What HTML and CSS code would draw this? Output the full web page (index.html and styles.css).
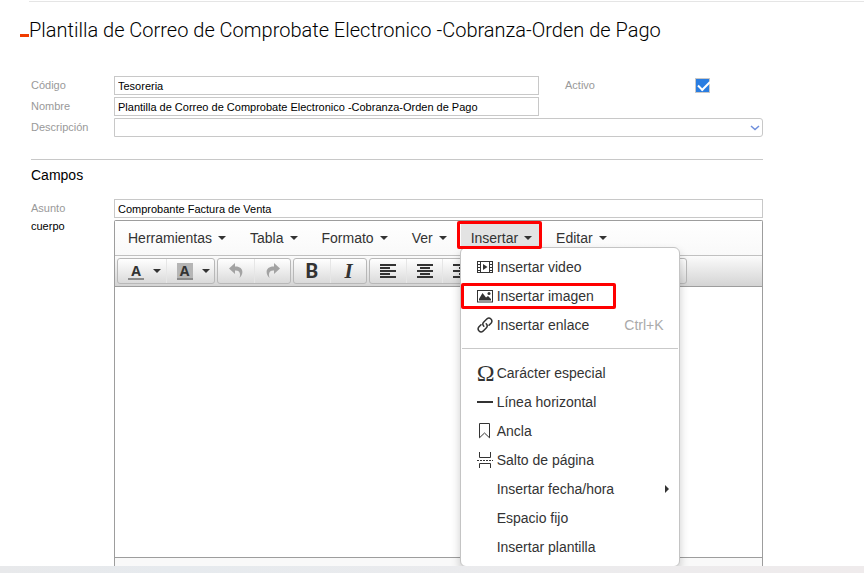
FILE: index.html
```html
<!DOCTYPE html>
<html lang="es">
<head>
    <meta charset="UTF-8">
    <meta name="viewport" content="width=device-width, initial-scale=1.0">
    <title>Plantilla de Correo</title>
    <link rel="stylesheet" href="styles.css">
</head>
<body>
    <main class="page">
        <h1 class="page-title"><span class="dash"></span>Plantilla de Correo de Comprobate Electronico -Cobranza-Orden de Pago</h1>

        <form class="form">
            <div class="row">
                <label for="codigo">Código</label>
                <input type="text" id="codigo" value="Tesoreria">
                <div class="side">
                    <label for="activo">Activo</label>
                    <input type="checkbox" id="activo" class="check" checked>
                </div>
            </div>
            <div class="row">
                <label for="nombre">Nombre</label>
                <input type="text" id="nombre" value="Plantilla de Correo de Comprobate Electronico -Cobranza-Orden de Pago">
            </div>
            <div class="row wide">
                <label for="descripcion">Descripción</label>
                <div class="select-wrap">
                    <select id="descripcion"><option></option></select>
                    <svg class="chevron" width="10" height="6" viewBox="0 0 10 6"><path d="M1 1l4 3.600L9 1" fill="none" stroke="#6f8fdc" stroke-width="1.500"/></svg>
                </div>
            </div>

            <h2 class="section-title">Campos</h2>

            <div class="row wide">
                <label for="asunto">Asunto</label>
                <input type="text" id="asunto" value="Comprobante Factura de Venta">
            </div>
            <div class="row wide body-row">
                <span class="body-label">cuerpo</span>
                <div class="editor">
                    <div class="menubar">
                        <button type="button" class="menu-btn">Herramientas<i class="caret"></i></button>
                        <button type="button" class="menu-btn">Tabla<i class="caret"></i></button>
                        <button type="button" class="menu-btn">Formato<i class="caret"></i></button>
                        <button type="button" class="menu-btn">Ver<i class="caret"></i></button>
                        <div class="menu-holder">
                            <button type="button" class="menu-btn active">Insertar<i class="caret"></i></button>
                            <span class="mark mark-menu"></span>
                            <ul class="dropdown">
                                <li><button type="button" class="item">
                                    <svg class="icon" viewBox="0 0 16 16"><path fill="#333" fill-rule="evenodd" d="M0 2h16v12H0zM1 3v2h2V3zM1 6v2h2V6zM1 9v2h2V9zM1 12v1h2v-1zM13 3v2h2V3zM13 6v2h2V6zM13 9v2h2V9zM13 12v1h2v-1zM4 3v10h8V3z"/><path fill="#333" d="M6 5l4.500 3L6 11z"/></svg>
                                    <span>Insertar video</span></button></li>
                                <li><button type="button" class="item">
                                    <svg class="icon" viewBox="0 0 16 16"><path fill="#333" fill-rule="evenodd" d="M0 2h16v12.500H0zM1 3v10.500h14V3z"/><path fill="#333" d="M2 12.500V11l3.500-6 3.500 4.500 2-1.500L14 11v1.500z"/><circle cx="12" cy="5.500" r="1.500" fill="#333"/></svg>
                                    <span>Insertar imagen</span></button><span class="mark mark-item"></span></li>
                                <li><button type="button" class="item">
                                    <svg class="icon" viewBox="0 0 16 16"><g fill="none" stroke="#333" stroke-width="1.500" stroke-linecap="round"><path d="M6.800 9.200a3 3 0 0 1 0-4.200L10 1.800a3 3 0 0 1 4.200 4.200L12 8.200"/><path d="M9.200 6.800a3 3 0 0 1 0 4.200L6 14.200A3 3 0 0 1 1.800 10L4 7.800"/></g></svg>
                                    <span>Insertar enlace</span><span class="shortcut">Ctrl+K</span></button></li>
                                <li class="divider"></li>
                                <li><button type="button" class="item"><span class="icon omega">Ω</span><span>Carácter especial</span></button></li>
                                <li><button type="button" class="item">
                                    <svg class="icon" viewBox="0 0 16 16"><path fill="#333" d="M0 7h16v2H0z"/></svg>
                                    <span>Línea horizontal</span></button></li>
                                <li><button type="button" class="item">
                                    <svg class="icon" viewBox="0 0 16 16"><path fill="none" stroke="#333" d="M2.500.5h10v14.300l-5-4.800-5 4.800z"/></svg>
                                    <span>Ancla</span></button></li>
                                <li><button type="button" class="item">
                                    <svg class="icon" viewBox="0 0 16 16"><path fill="none" stroke="#333" d="M2.500 0v5.500h11V0M2.500 16v-4.500h11V16"/><path stroke="#333" stroke-dasharray="2 1" d="M0 8.500h16"/></svg>
                                    <span>Salto de página</span></button></li>
                                <li><button type="button" class="item"><span class="icon"></span><span>Insertar fecha/hora</span><i class="arrow"></i></button></li>
                                <li><button type="button" class="item"><span class="icon"></span><span>Espacio fijo</span></button></li>
                                <li><button type="button" class="item"><span class="icon"></span><span>Insertar plantilla</span></button></li>
                            </ul>
                        </div>
                        <button type="button" class="menu-btn">Editar<i class="caret"></i></button>
                    </div>

                    <div class="toolbar">
                        <div class="group">
                            <button type="button" class="tool split"><span class="letter">A</span><i class="caret"></i></button>
                            <button type="button" class="tool split"><span class="letter filled">A</span><i class="caret"></i></button>
                        </div>
                        <div class="group">
                            <button type="button" class="tool" aria-label="Deshacer"><svg class="icon faded" viewBox="0 0 16 16"><path d="M7 0L1 5.500 7 11V7.500c4.500-.2 6 2.500 4.500 7.500C16.500 10 15 3.200 7 3.500z"/></svg></button>
                            <button type="button" class="tool" aria-label="Rehacer"><svg class="icon faded" viewBox="0 0 16 16"><path d="M9 0l6 5.500L9 11V7.500C4.500 7.300 3 10 4.500 15-.5 10 1 3.200 9 3.500z"/></svg></button>
                        </div>
                        <div class="group">
                            <button type="button" class="tool bold">B</button>
                            <button type="button" class="tool italic">I</button>
                        </div>
                        <div class="group">
                            <button type="button" class="tool" aria-label="Izquierda"><svg class="icon" viewBox="0 0 16 16"><path fill="#333" d="M0 1h16v2H0zM0 4h10v2H0zM0 7h16v2H0zM0 10h10v2H0zM0 13h16v2H0z"/></svg></button>
                            <button type="button" class="tool" aria-label="Centro"><svg class="icon" viewBox="0 0 16 16"><path fill="#333" d="M0 1h16v2H0zM3 4h10v2H3zM0 7h16v2H0zM3 10h10v2H3zM0 13h16v2H0z"/></svg></button>
                            <button type="button" class="tool" aria-label="Derecha"><svg class="icon" viewBox="0 0 16 16"><path fill="#333" d="M0 1h16v2H0zM6 4h10v2H6zM0 7h16v2H0zM6 10h10v2H6zM0 13h16v2H0z"/></svg></button>
                            <button type="button" class="tool last" aria-label="Justificar"></button>
                        </div>
                    </div>
                    <div class="edit-area" contenteditable="true" aria-label="cuerpo"></div>
                    <div class="statusbar"></div>
                </div>
            </div>
        </form>
    </main>
    <footer class="bottom-strip"></footer>
</body>
</html>
```
FILE: styles.css
```css
* { box-sizing: border-box; }

body {
    margin: 0;
    height: 100vh;
    display: flex;
    flex-direction: column;
    font-family: "Liberation Sans", Arial, sans-serif;
    font-size: 11px;
    color: #000;
    background: #fff;
}
button {
    font: inherit;
    color: inherit;
    background: none;
    border: 0;
    padding: 0;
}
.page {
    flex: 1;
    min-height: 0;
    display: flex;
    flex-direction: column;
    overflow: hidden;
    padding-top: 1px;
}
.page-title {
    margin: 0 0 0 29px;
    border-top: 1px solid #e5e5e5;
    font: 300 20px/56px Roboto, sans-serif;
    white-space: nowrap;
}
.dash {
    display: inline-block;
    width: 9px;
    height: 3px;
    margin-left: -9px;
    background: #f03c00;
}

/* form */
.form {
    flex: 1;
    min-height: 0;
    display: flex;
    flex-direction: column;
    gap: 2px;
    margin: 18px 101px 0 31px;
}
.row {
    display: grid;
    grid-template-columns: 83px 1fr 224px;
    align-items: center;
}
.row.wide { grid-template-columns: 83px 1fr; }
.row label {
    padding-bottom: 2px;
    color: #999;
}
.row input[type="text"], select {
    width: 100%;
    height: 19px;
    padding: 1px 3px 0;
    border: 1px solid #c8c8c8;
    font: inherit;
    color: #000;
    background: #fff;
}
.side {
    display: flex;
    align-items: center;
    padding-left: 26px;
}
.side label { width: 130px; }
.check {
    appearance: none;
    position: relative;
    width: 15px;
    height: 15px;
    margin: 0;
    border: 1px solid #c8c8c8;
}
.check:checked { background: #2a7de1; }
.check:checked::after {
    content: "";
    position: absolute;
    left: 2px;
    top: 2px;
    width: 10px;
    height: 5px;
    border: solid #fff;
    border-width: 0 0 2px 2px;
    transform: rotate(-45deg);
}
.select-wrap { position: relative; display: flex; }
select {
    appearance: none;
    border-radius: 0 3px 3px 0;
}
.chevron {
    position: absolute;
    right: 3px;
    top: 7px;
}
.section-title {
    margin: 20px 0 7px;
    border-top: 1px solid #c8c8c8;
    font-size: 14px;
    font-weight: normal;
    line-height: 30px;
}
.row.body-row {
    flex: 1;
    align-items: stretch;
}
.body-label { line-height: 12px; }

/* editor */
.editor {
    display: flex;
    flex-direction: column;
    border: 1px solid #9d9d9d;
    border-bottom: 0;
    border-radius: 2px 2px 0 0;
    font-size: 14px;
    color: #333;
}
.menubar {
    display: flex;
    align-items: center;
    gap: 4px;
    height: 35px;
    padding: 0 3px;
    border-bottom: 1px solid #c0c0c0;
    background: linear-gradient(#fff, #f9f9f9);
}
.menu-btn {
    display: flex;
    align-items: center;
    height: 28px;
    padding: 0 10px;
}
.menu-btn.active { background: #e3e3e3; }
.caret {
    flex: none;
    margin-left: 6px;
    border: 4px solid transparent;
    border-top-color: #333;
    border-bottom: 0;
}
.menu-holder { position: relative; }
.mark {
    position: absolute;
    z-index: 3;
    border: 3px solid #f00;
    border-radius: 2px;
    pointer-events: none;
}
.mark-menu { inset: -3px 0 3px -4px; }
.mark-item { inset: 2px 63px 1px 0; }

.dropdown {
    position: absolute;
    z-index: 2;
    top: 23px;
    left: -1px;
    width: 220px;
    margin: 0;
    padding: 4px 0 5px;
    list-style: none;
    background: #fff;
    border: 1px solid #c4c4c4;
    border-radius: 6px;
    box-shadow: 0 5px 10px rgba(0,0,0,0.2);
}
.dropdown li { position: relative; }
.item {
    display: flex;
    align-items: center;
    gap: 4px;
    width: 100%;
    height: 29px;
    padding: 0 15px 0 16px;
    text-align: left;
}
.dropdown .divider {
    height: 1px;
    margin: 9px 1px;
    background: #c9c9c9;
}
.shortcut { margin-left: auto; color: #aaa; }
.arrow {
    margin: 0 -5px 0 auto;
    border: 4px solid transparent;
    border-left-color: #333;
    border-right: 0;
}
.icon {
    flex: none;
    width: 16px;
    height: 16px;
}
.omega {
    font: 24px/16px "Liberation Serif", serif;
}

/* toolbar */
.toolbar {
    display: flex;
    gap: 2px;
    height: 31px;
    padding: 2px;
    border-bottom: 1px solid #9d9d9d;
    background: linear-gradient(#fbfbfb, #d4d4d4);
}
.group {
    display: flex;
    height: 26px;
    border: 1px solid #b8b8b8;
    border-radius: 3px;
    background: linear-gradient(#fff, #dadada);
}
.tool {
    display: flex;
    align-items: center;
    justify-content: center;
    width: 36px;
}
.tool + .tool { border-left: 1px solid #e6e6e6; }
.tool.split { width: 48px; }
.tool.split .caret { margin-left: 9px; }
.tool.last { width: 208px; }
.letter {
    width: 16px;
    height: 17px;
    margin-left: 5px;
    border-bottom: 2px solid #8a8a8a;
    font: bold 14px/16px "Open Sans", sans-serif;
}
.letter.filled { background: #b5b5b5; }
.bold { font: bold 20px Roboto, sans-serif; }
.italic { font: italic bold 21px "Liberation Serif", serif; }
.faded { fill: #a3a3a3; }

.edit-area { flex: 1; outline: 0; }
.statusbar {
    height: 9px;
    border-top: 1px solid #9d9d9d;
    background: #f9f9f9;
}
.bottom-strip {
    position: relative;
    z-index: 4;
    height: 7px;
    background: linear-gradient(90deg, #e8e9eb, #e6eaee 20%, #ebebed 60%, #efebec);
}
```
